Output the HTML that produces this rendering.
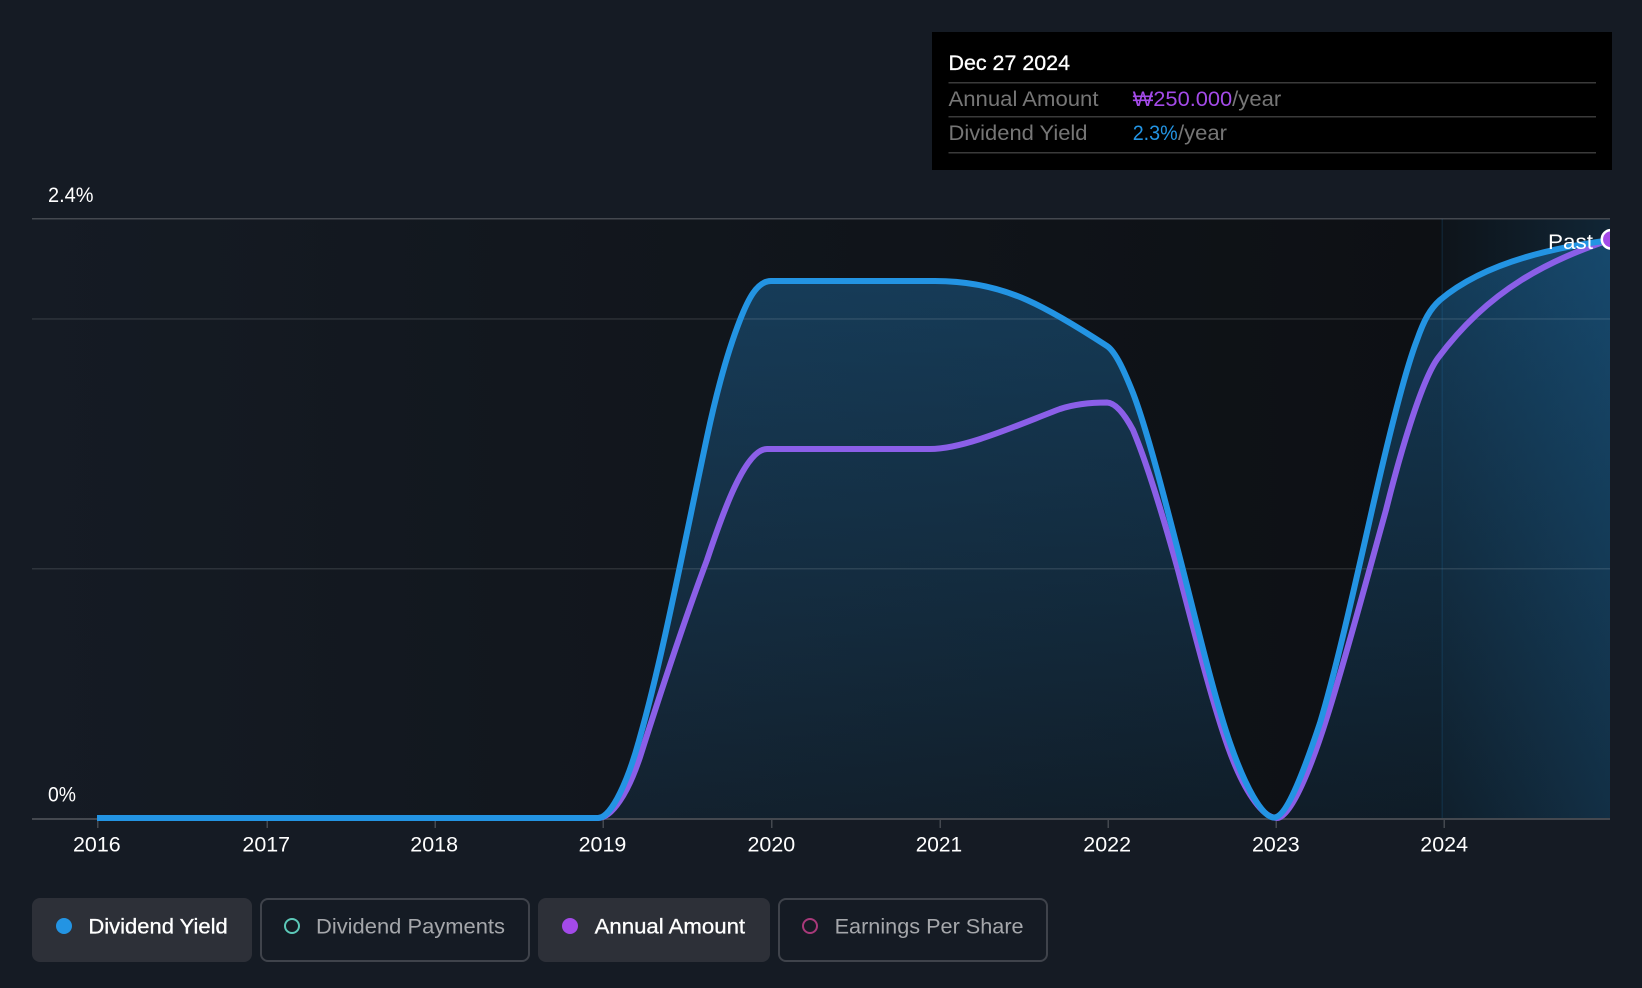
<!DOCTYPE html>
<html>
<head>
<meta charset="utf-8">
<style>
html,body{margin:0;padding:0;background:#151b24;}
body{width:1642px;height:988px;overflow:hidden;}
svg{display:block;}
text{font-family:"Liberation Sans","DejaVu Sans",sans-serif;font-size:21px;}
</style>
</head>
<body>
<svg width="1642" height="988" viewBox="0 0 1642 988" xmlns="http://www.w3.org/2000/svg">
<defs>
<linearGradient id="plotBg" x1="32" x2="1444" y1="0" y2="0" gradientUnits="userSpaceOnUse">
<stop offset="0" stop-color="#151b24"/>
<stop offset="0.35" stop-color="#12171e"/>
<stop offset="1" stop-color="#0d1014"/>
</linearGradient>
<linearGradient id="areaFill" x1="0" x2="0" y1="219" y2="818" gradientUnits="userSpaceOnUse">
<stop offset="0" stop-color="#2394e3" stop-opacity="0.33"/>
<stop offset="1" stop-color="#2394e3" stop-opacity="0.09"/>
</linearGradient>
<linearGradient id="pastFill" x1="1443" x2="1610" y1="0" y2="0" gradientUnits="userSpaceOnUse">
<stop offset="0" stop-color="#2394e3" stop-opacity="0.03"/>
<stop offset="1" stop-color="#2394e3" stop-opacity="0.16"/>
</linearGradient>
<clipPath id="plotClip"><rect x="32" y="200" width="1578" height="625"/></clipPath>
</defs>

<rect width="1642" height="988" fill="#151b24"/>

<!-- plot background -->
<rect x="32" y="219" width="1578" height="600" fill="url(#plotBg)"/>
<rect x="1443" y="219" width="167" height="600" fill="url(#pastFill)"/>

<!-- area -->
<path fill="url(#areaFill)" d="M598 818 C612 818 629 778 640 737 C662 660 685 540 707 437 C718 385.5 729 348 740 320 C748 299.5 757 281 771 281 L935 281 C970 281 1000 288 1027 300 C1054 312 1087 333 1107 346 C1116 352 1125 373 1133 393 C1148 432 1168 512 1183 570 C1198 629 1215 700 1230 743 C1245 786 1262 817.5 1274 817.5 C1287 817.5 1305 768 1320 723 C1336 670 1355 585 1372 510 C1387 444 1405 371 1417 340 C1424 320 1430 309 1440 300 C1485 262 1555 247 1610 240 L1610 818 Z"/>

<!-- grid -->
<rect x="32" y="218" width="1578" height="1.5" fill="#44484f"/>
<rect x="32" y="318.2" width="1578" height="1.5" fill="#ffffff" fill-opacity="0.11"/>
<rect x="32" y="568" width="1578" height="1.5" fill="#ffffff" fill-opacity="0.11"/>
<rect x="32" y="818" width="1578" height="2" fill="#44484f"/>

<!-- past divider -->
<rect x="1441.5" y="219" width="1.5" height="599" fill="#2394e3" fill-opacity="0.14"/>

<!-- ticks -->
<g fill="#44484f">
<rect x="97" y="819" width="1.5" height="9"/>
<rect x="266.5" y="819" width="1.5" height="9"/>
<rect x="434.5" y="819" width="1.5" height="9"/>
<rect x="602.5" y="819" width="1.5" height="9"/>
<rect x="771" y="819" width="1.5" height="9"/>
<rect x="939.5" y="819" width="1.5" height="9"/>
<rect x="1107.5" y="819" width="1.5" height="9"/>
<rect x="1275.5" y="819" width="1.5" height="9"/>
<rect x="1443.5" y="819" width="1.5" height="9"/>
</g>

<!-- y labels -->
<text x="48" y="202" fill="#fff" textLength="45.5" lengthAdjust="spacingAndGlyphs">2.4%</text>
<text x="48" y="801.5" fill="#fff" textLength="28" lengthAdjust="spacingAndGlyphs">0%</text>

<!-- x labels -->
<g fill="#fff">
<text x="73" y="851.5" textLength="47.7" lengthAdjust="spacingAndGlyphs">2016</text>
<text x="242.4" y="851.5" textLength="47.7" lengthAdjust="spacingAndGlyphs">2017</text>
<text x="410.3" y="851.5" textLength="47.7" lengthAdjust="spacingAndGlyphs">2018</text>
<text x="578.6" y="851.5" textLength="47.7" lengthAdjust="spacingAndGlyphs">2019</text>
<text x="747.5" y="851.5" textLength="47.7" lengthAdjust="spacingAndGlyphs">2020</text>
<text x="915.7" y="851.5" textLength="46.5" lengthAdjust="spacingAndGlyphs">2021</text>
<text x="1083.3" y="851.5" textLength="47.7" lengthAdjust="spacingAndGlyphs">2022</text>
<text x="1252" y="851.5" textLength="47.7" lengthAdjust="spacingAndGlyphs">2023</text>
<text x="1420.3" y="851.5" textLength="47.7" lengthAdjust="spacingAndGlyphs">2024</text>
</g>

<!-- lines -->
<g clip-path="url(#plotClip)" fill="none" stroke-width="6" stroke-linejoin="round" stroke-linecap="butt">
<path stroke="#8b5fe8" d="M598 818 C612 818 628 793 640 757 C662 688 686 616 707 560 C722 515 745 449 767 449 L930 449 C965 449 1020 424 1060 409 C1078 403 1095 402.5 1107 402.5 C1116 403 1125 415 1133 430 C1146 461 1163 516 1178 570 C1194 631 1212 702 1228 747 C1243 789 1262 818 1277 818 C1291 818 1312 765 1327 717 C1346 657 1366 582 1386 510 C1399 458 1421 381 1438 358 C1490 288 1550 260 1612 239"/>
<path stroke="#2394e3" d="M97 818 L598 818 C612 818 629 778 640 737 C662 660 685 540 707 437 C718 385.5 729 348 740 320 C748 299.5 757 281 771 281 L935 281 C970 281 1000 288 1027 300 C1054 312 1087 333 1107 346 C1116 352 1125 373 1133 393 C1148 432 1168 512 1183 570 C1198 629 1215 700 1230 743 C1245 786 1262 817.5 1274 817.5 C1287 817.5 1305 768 1320 723 C1336 670 1355 585 1372 510 C1387 444 1405 371 1417 340 C1424 320 1430 309 1440 300 C1485 262 1555 247 1612 240"/>
<circle cx="1611" cy="239.3" r="9.2" fill="#a34ae8" stroke="#fff" stroke-width="2.5"/>
</g>

<text x="1548" y="249" fill="#fff" textLength="45" lengthAdjust="spacingAndGlyphs">Past</text>

<!-- tooltip -->
<rect x="932" y="32" width="680" height="138" fill="#000"/>
<text x="948.5" y="70" fill="#fff" stroke="#fff" stroke-width="0.3" textLength="121.5" lengthAdjust="spacingAndGlyphs">Dec 27 2024</text>
<rect x="948.5" y="82" width="647.5" height="1.5" fill="#3a3a3a"/>
<text x="948.5" y="106" fill="#767676" textLength="150" lengthAdjust="spacingAndGlyphs">Annual Amount</text>
<text x="1132.7" y="106" fill="#a34ae8" textLength="99.5" lengthAdjust="spacingAndGlyphs">₩250.000</text>
<text x="1232.2" y="106" fill="#767676" textLength="49" lengthAdjust="spacingAndGlyphs">/year</text>
<rect x="948.5" y="116" width="647.5" height="1.5" fill="#3a3a3a"/>
<text x="948.5" y="140" fill="#767676" textLength="139" lengthAdjust="spacingAndGlyphs">Dividend Yield</text>
<text x="1132.7" y="140" fill="#2394e3" textLength="45" lengthAdjust="spacingAndGlyphs">2.3%</text>
<text x="1178" y="140" fill="#767676" textLength="49" lengthAdjust="spacingAndGlyphs">/year</text>
<rect x="948.5" y="152" width="647.5" height="1.5" fill="#3a3a3a"/>

<!-- legend -->
<rect x="32" y="898" width="220" height="64" rx="8" fill="#2d3038"/>
<circle cx="64" cy="926" r="8" fill="#2394e3"/>
<text x="88.4" y="933.5" fill="#fff" stroke="#fff" stroke-width="0.3" textLength="139.3" lengthAdjust="spacingAndGlyphs">Dividend Yield</text>

<rect x="261" y="899" width="268" height="62" rx="7" fill="none" stroke="#3f434b" stroke-width="2"/>
<circle cx="292" cy="926" r="7" fill="none" stroke="#5cc8b8" stroke-width="2"/>
<text x="316" y="933.5" fill="#a5a7ab" textLength="189" lengthAdjust="spacingAndGlyphs">Dividend Payments</text>

<rect x="538" y="898" width="232" height="64" rx="8" fill="#2d3038"/>
<circle cx="570" cy="926" r="8" fill="#a34ae8"/>
<text x="594.6" y="933.5" fill="#fff" stroke="#fff" stroke-width="0.3" textLength="150.5" lengthAdjust="spacingAndGlyphs">Annual Amount</text>

<rect x="779" y="899" width="268" height="62" rx="7" fill="none" stroke="#3f434b" stroke-width="2"/>
<circle cx="810" cy="926" r="7" fill="none" stroke="#a8397a" stroke-width="2"/>
<text x="834.6" y="933.5" fill="#a5a7ab" textLength="189" lengthAdjust="spacingAndGlyphs">Earnings Per Share</text>
</svg>
</body>
</html>
